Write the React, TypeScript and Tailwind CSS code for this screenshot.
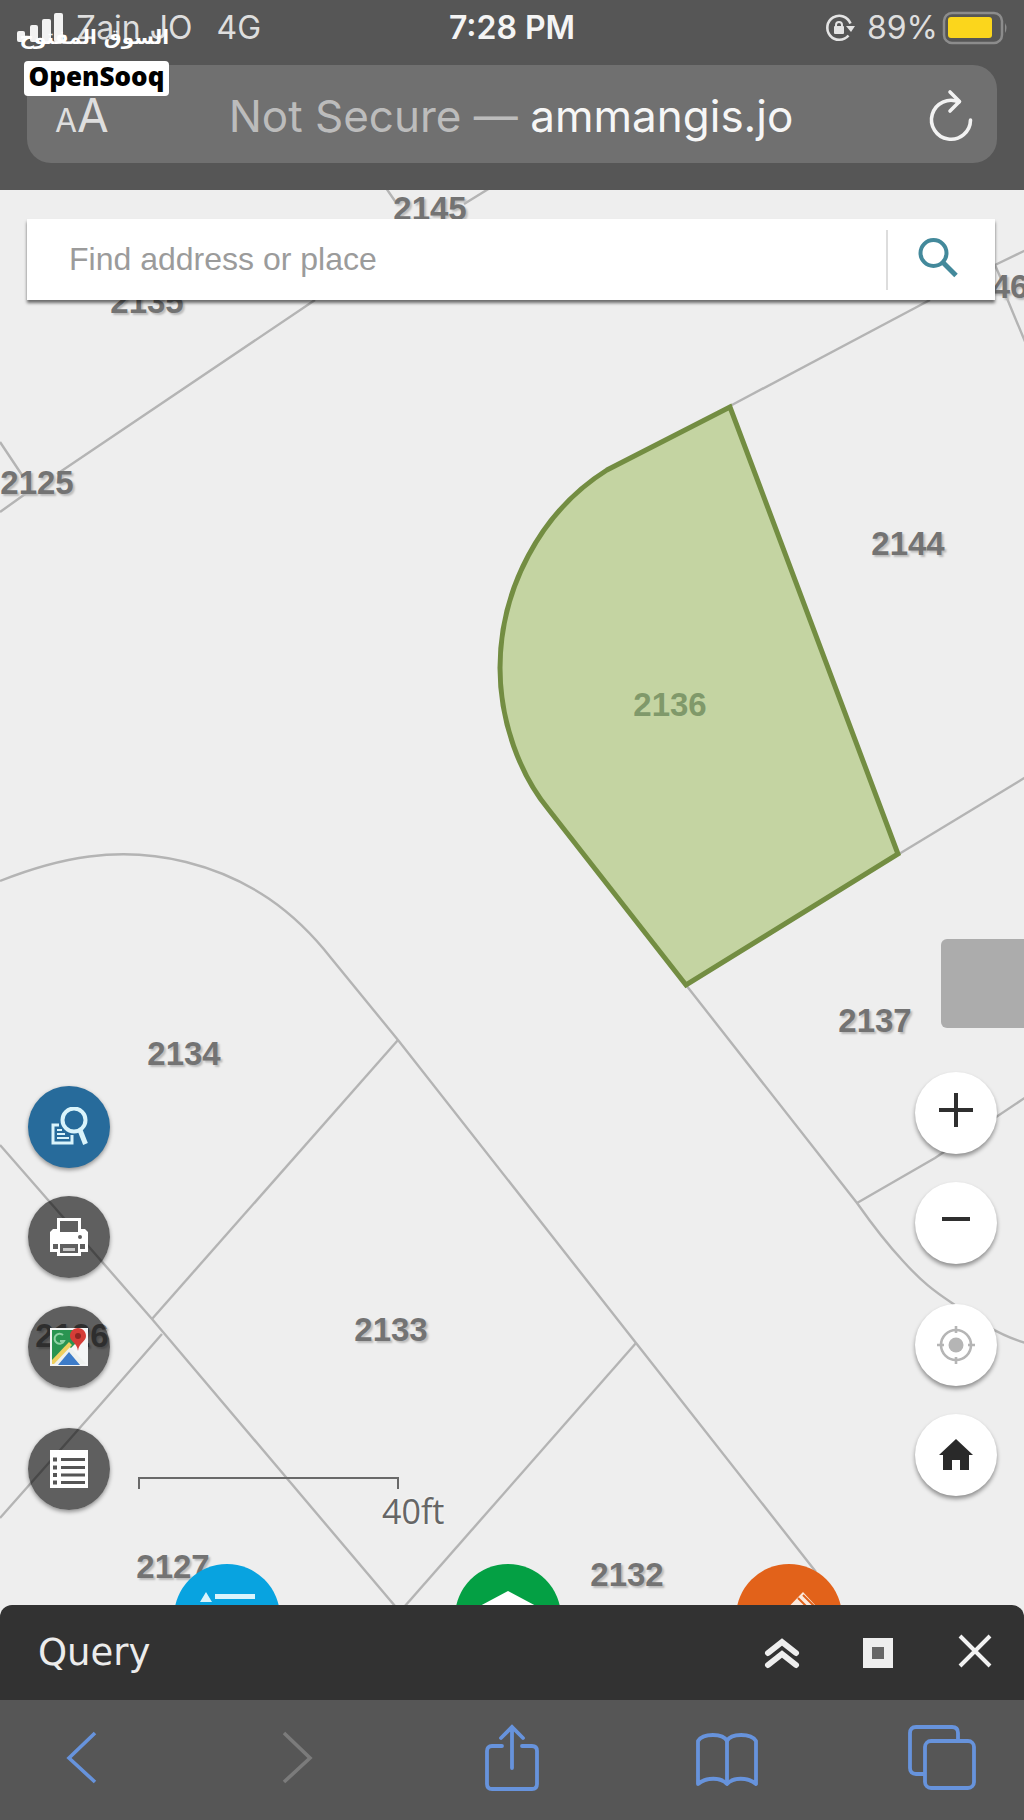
import { useState } from "react";
import type { ReactNode } from "react";

type ParcelLabel = {
  id: string;
  x: number;
  y: number;
  selected?: boolean;
};

const parcelLabels: ParcelLabel[] = [
  { id: "2145", x: 430, y: 220 },
  { id: "2135", x: 147, y: 313 },
  { id: "2125", x: 37, y: 494 },
  { id: "46", x: 1010, y: 298 },
  { id: "2144", x: 908, y: 555 },
  { id: "2136", x: 670, y: 716, selected: true },
  { id: "2137", x: 875, y: 1032 },
  { id: "2134", x: 184, y: 1065 },
  { id: "2126", x: 72, y: 1347 },
  { id: "2133", x: 391, y: 1341 },
  { id: "2132", x: 627, y: 1586 },
  { id: "2127", x: 173, y: 1578 },
];

const parcelLines = [
  "M386 188 397 204M490 188 464 204",
  "M315 300 57 474M0 442 24 478M0 512 28 492",
  "M730 406 930 300",
  "M1026 250 995 265 1002 281M1006 296 1026 344",
  "M899 854 1026 777",
  "M686 985 857 1203C876 1230 890 1247 903 1261C922 1282 934 1291 952 1303C975 1320 1000 1336 1026 1343",
  "M857 1203 935 1158 1026 1097",
  "M0 881C58 858 118 845 186 862C250 878 295 912 331 958L398 1040 636 1343 816 1572",
  "M398 1040 152 1319",
  "M0 1145 152 1319 395 1606",
  "M162 1334 100 1405 0 1518",
  "M636 1343 405 1606",
];

function ParcelMap() {
  return (
    <svg className="absolute inset-0 h-full w-full" viewBox="0 190 1024 1415" preserveAspectRatio="xMidYMid slice" aria-label="Parcel map">
      <g fill="none" stroke="#b4b4b4" strokeWidth="2.4">
        {parcelLines.map((line) => (
          <path key={line} d={line} />
        ))}
      </g>
      <path d="M730 407 607 470C540 512 500 590 500 668C500 722 520 775 549 810L686 985 898 854Z" fill="#c4d4a2" stroke="#738d42" strokeWidth="5" />
      <g className="font-['Liberation_Sans',sans-serif] text-[33px] font-bold [text-shadow:2px_2px_2px_#bbbbbb]" textAnchor="middle">
        {parcelLabels.map((label) => (
          <text key={label.id} x={label.x} y={label.y} className={label.selected ? "fill-[#80996a] [text-shadow:none]" : "fill-[#737373]"}>
            {label.id}
          </text>
        ))}
      </g>
    </svg>
  );
}

function StatusBar() {
  return (
    <div className="grid h-14 grid-cols-3 items-center px-4 text-[32px] text-[#dedede]">
      <div className="flex items-center gap-3">
        <svg width="48" height="30" viewBox="0 0 48 30" fill="#f2f2f2">
          <rect x="1" y="18" width="8" height="11" rx="2" />
          <rect x="14" y="12" width="8" height="17" rx="2" />
          <rect x="26" y="6" width="9" height="23" rx="2" />
          <rect x="38" y="0" width="9" height="29" rx="2" />
        </svg>
        <span className="whitespace-nowrap">Zain JO</span>
        <span className="ml-3">4G</span>
      </div>
      <div className="text-center font-semibold text-[#f4f4f4]">7:28 PM</div>
      <div className="flex items-center justify-end">
        <svg className="mr-3" width="30" height="30" viewBox="0 0 30 30" fill="none" stroke="#e4e4e4" strokeWidth="2.6">
          <path d="M25.5 10.5A12 12 0 1 0 23.5 22.5" />
          <path d="M21 13h9l-4 6z" fill="#e4e4e4" stroke="none" />
          <rect x="9" y="13" width="10" height="8" rx="1" fill="#e4e4e4" stroke="none" />
          <path d="M11 14v-2a3 3 0 0 1 6 0v2" strokeWidth="2" />
        </svg>
        <span>89%</span>
        <svg className="ml-1" width="66" height="34" viewBox="0 0 66 34">
          <rect x="2" y="2" width="58" height="30" rx="8" fill="none" stroke="#8c8c8c" strokeWidth="2.5" />
          <rect x="6" y="6" width="44" height="21" rx="3" fill="#fbd61c" />
          <path d="M63 12q3 5 0 10z" fill="#8c8c8c" />
        </svg>
      </div>
    </div>
  );
}

function Watermark() {
  return (
    <div className="absolute top-4 left-6 w-[145px] text-center">
      <div dir="rtl" lang="ar" className="h-[45px] font-['DejaVu_Sans',sans-serif] text-[20px] leading-[42px] font-bold whitespace-nowrap text-white">
        السوق المفتوح
      </div>
      <div className="h-[35px] rounded-sm bg-white font-['Open_Sans',sans-serif] text-[26px] leading-[31px] font-extrabold text-black">OpenSooq</div>
    </div>
  );
}

function AddressBar() {
  return (
    <div className="mx-[27px] mt-[9px] flex h-[98px] items-center justify-between rounded-3xl bg-[#707070] pt-1 pr-[22px] pl-7">
      <button type="button" aria-label="Text size" className="flex w-10 items-baseline pt-1 text-[#dedede]">
        <span className="text-[32px]">A</span>
        <span className="text-[46px] leading-none">A</span>
      </button>
      <div className="text-[44px] leading-none whitespace-nowrap text-[#bcbcbc]">
        Not Secure — <span className="text-[#f6f6f6]">ammangis.jo</span>
      </div>
      <button type="button" aria-label="Reload">
        <svg width="48" height="54" viewBox="0 0 48 54" fill="none" stroke="#f2f2f2" strokeWidth="3.6" strokeLinecap="round" strokeLinejoin="round">
          <path d="M32 13A19.5 19.5 0 1 0 43.5 31" />
          <path d="M23 3 32.5 12.5 23 22" />
        </svg>
      </button>
    </div>
  );
}

function SearchForm() {
  const [query, setQuery] = useState("");

  return (
    <form className="mt-[29px] mr-[29px] ml-[27px] flex h-[81px] items-center bg-white shadow-[0_3px_3px_rgba(0,0,0,0.55)]" onSubmit={(event) => event.preventDefault()}>
      <input
        type="text"
        aria-label="Find address or place"
        placeholder="Find address or place"
        className="h-full min-w-0 flex-1 pl-[42px] font-['Liberation_Sans',sans-serif] text-[32px] text-[#555555] outline-none placeholder:text-[#9b9b9b]"
        value={query}
        onChange={(event) => setQuery(event.target.value)}
      />
      <button type="submit" aria-label="Search" className="flex h-[60px] w-[109px] items-center justify-center border-l-2 border-[#dddddd] pr-2 pb-1">
        <svg width="42" height="42" viewBox="0 0 42 42" fill="none" stroke="#43899b" strokeWidth="4">
          <circle cx="16.5" cy="16" r="13" />
          <path d="M25.5 25 39 38.5" strokeWidth="5" />
        </svg>
      </button>
    </form>
  );
}

function ToolButton({ label, active, children }: { label: string; active?: boolean; children: ReactNode }) {
  return (
    <button
      type="button"
      aria-label={label}
      className={`flex size-[82px] items-center justify-center rounded-full shadow-[0_2px_4px_rgba(0,0,0,0.4)] ${active ? "bg-[#276b9b]" : "bg-black/60"}`}
    >
      {children}
    </button>
  );
}

function NavButton({ label, children }: { label: string; children: ReactNode }) {
  return (
    <button type="button" aria-label={label} className="flex size-[82px] items-center justify-center rounded-full bg-white shadow-[0_3px_4px_rgba(0,0,0,0.4)]">
      {children}
    </button>
  );
}

function MapTools() {
  return (
    <div className="flex flex-col gap-7">
      <ToolButton label="Query" active>
        <svg width="40" height="40" viewBox="0 0 40 40" fill="none" stroke="#daf4fb" strokeWidth="3">
          <path d="M10 18H4v18h19V28" />
          <path d="M8 23h5M8 27h8M8 31h12" strokeWidth="2" />
          <circle cx="25" cy="13" r="11.5" strokeWidth="4" />
          <path d="M31 23 36.500 37" strokeWidth="5" />
        </svg>
      </ToolButton>
      <ToolButton label="Print">
        <svg width="40" height="40" viewBox="0 0 40 40">
          <path d="M8 1h24v11h4l3 3v20h-7v4H8v-4H1V15l3-3h4z" fill="#ffffff" />
          <path d="M11 4h18v11H11z" fill="#5f5f5f" />
          <circle cx="31" cy="20" r="2" fill="#5f5f5f" />
          <path d="M4 27h5v5H4zM31 27h5v5h-5zM11 27h18v9H11z" fill="#5f5f5f" />
          <path d="M14 31h12v3H14z" fill="#c8c8c8" />
        </svg>
      </ToolButton>
      <ToolButton label="Google Maps">
        <svg width="40" height="40" viewBox="0 0 40 40">
          <path d="M1 1h38v38H1z" fill="#f5f6f6" />
          <path d="M3 3h24v13L6 37l-3-3z" fill="#299451" />
          <path d="m3 37 17-18 17 18z" fill="#eef1ee" />
          <path d="m3 33 17-18 3 3L5 37H3z" fill="#f0d060" />
          <path d="m9 38 11-13 11 13z" fill="#3d7cc9" />
          <path d="M14 8a5 5 0 1 0 1 6h-4" fill="none" stroke="#8fd2a4" strokeWidth="2" />
          <path d="M29 1c-5 0-8 4-8 8 0 6 7 6 8 15 1-9 8-9 8-15 0-4-3-8-8-8z" fill="#d63d37" />
          <circle cx="29" cy="9" r="3" fill="#8e2522" />
        </svg>
      </ToolButton>
      <div className="mt-3 flex gap-7">
        <ToolButton label="Legend">
          <svg width="40" height="40" viewBox="0 0 40 40">
            <path d="M1 1h38v38H1z" fill="#ffffff" />
            <path d="M12 10.500h24M12 18.500h24M12 26h24M12 33.500h24" stroke="#555555" strokeWidth="3" />
            <path d="M4 10.500h4M4 18.500h4M4 26h4M4 33.500h4" stroke="#555555" strokeWidth="4" />
          </svg>
        </ToolButton>
        <div className="mt-[49px] flex h-[33px]">
          <div className="h-3 w-[261px] border-x-2 border-t-2 border-[#696969]" />
          <span className="-ml-[17px] pt-4 font-['Open_Sans',sans-serif] text-[34px] leading-9 text-[#666666] [text-shadow:0_0_3px_white]">40ft</span>
        </div>
      </div>
    </div>
  );
}

function MapNavigation() {
  return (
    <div className="flex flex-col items-end">
      <button type="button" aria-label="Open side panel" className="h-[89px] w-[83px] rounded-l-md bg-[#acacac]" />
      <div className="mt-11 mr-[27px] flex flex-col gap-10">
        <div className="flex flex-col gap-7">
          <NavButton label="Zoom in">
            <svg width="40" height="40" viewBox="0 0 40 40" stroke="#2f2f2f" strokeWidth="4">
              <path d="M3 17h34M20 0v34" />
            </svg>
          </NavButton>
          <NavButton label="Zoom out">
            <svg width="40" height="40" viewBox="0 0 40 40" stroke="#2f2f2f" strokeWidth="4">
              <path d="M6 16h28" />
            </svg>
          </NavButton>
        </div>
        <div className="flex flex-col gap-7">
          <NavButton label="My location">
            <svg width="40" height="40" viewBox="0 0 40 40" fill="none" stroke="#b5b5b5" strokeWidth="2.6">
              <circle cx="20" cy="20" r="15" />
              <circle cx="20" cy="20" r="7.5" fill="#b5b5b5" stroke="none" />
              <path d="M20 1v7M20 32v7M1 20h7M32 20h7" />
            </svg>
          </NavButton>
          <NavButton label="Default extent">
            <svg width="40" height="40" viewBox="0 0 40 40" fill="#292929">
              <path d="M20 4 37 20H33V35H24V25H16V35H7V20H3z" />
            </svg>
          </NavButton>
        </div>
      </div>
    </div>
  );
}

function WidgetDock() {
  return (
    <div className="flex h-[41px] justify-center gap-[175px] overflow-hidden pr-[8px]">
      <button type="button" aria-label="Legend list" className="size-[106px] shrink-0 rounded-full bg-[#08a3e0]">
        <svg className="h-full w-full" viewBox="0 0 106 106" fill="#d9f4fc">
          <path d="m32 28 6 10H26zM41 30h40v5H41z" />
          <path d="M26 48h10v10H26zM41 50h40v5H41z" />
        </svg>
      </button>
      <button type="button" aria-label="Layers" className="size-[106px] shrink-0 rounded-full bg-[#04a044]">
        <svg className="h-full w-full" viewBox="0 0 106 106" fill="#ffffff">
          <path d="m53 27 30 16-30 16-30-16z" />
        </svg>
      </button>
      <button type="button" aria-label="Draw" className="size-[106px] shrink-0 rounded-full bg-[#e2621a]">
        <svg className="h-full w-full" viewBox="0 0 106 106">
          <path d="M67 28 80 42 54 68 42 54z" fill="#fbe9dd" />
          <path d="M62 34 74 46M67 31 78 42" stroke="#e2621a" strokeWidth="2" />
        </svg>
      </button>
    </div>
  );
}

function QueryPanelHeader() {
  return (
    <div className="bg-[#eeeeee]">
      <div className="flex h-[95px] items-center justify-between rounded-t-xl bg-[#323232] pr-[32px] pl-[38px]">
        <h2 className="font-['DejaVu_Sans',sans-serif] text-[37px] text-[#ececec]">Query</h2>
        <div className="flex items-center">
          <button type="button" aria-label="Expand" className="mr-[62px]">
            <svg width="36" height="32" viewBox="0 0 36 32" fill="none" stroke="#eeeeee" strokeWidth="6" strokeLinecap="round">
              <path d="M4 16 18 5 32 16M4 28 18 17 32 28" />
            </svg>
          </button>
          <button type="button" aria-label="Maximize" className="mr-[64px]">
            <svg width="32" height="32" viewBox="0 0 32 32">
              <path d="M1 1h30v30H1z" fill="#eeeeee" />
              <path d="M10 10h12v12H10z" fill="#666666" />
            </svg>
          </button>
          <button type="button" aria-label="Close" className="pb-1">
            <svg width="34" height="34" viewBox="0 0 34 34" fill="none" stroke="#f2f2f2" strokeWidth="4">
              <path d="M2 2 32 32M32 2 2 32" />
            </svg>
          </button>
        </div>
      </div>
    </div>
  );
}

function BrowserToolbar() {
  return (
    <nav className="flex h-[120px] items-center justify-between bg-[#565656] px-12 pb-1 text-[#6793dc]">
      <button type="button" aria-label="Back" className="flex w-[68px] justify-center">
        <svg width="34" height="54" viewBox="0 0 34 54" fill="none" stroke="currentColor" strokeWidth="3.6">
          <path d="M30 2 4 27 30 51" />
        </svg>
      </button>
      <button type="button" aria-label="Forward" className="flex w-[68px] justify-center text-[#7b7b7b]">
        <svg width="34" height="54" viewBox="0 0 34 54" fill="none" stroke="currentColor" strokeWidth="3.6">
          <path d="M4 2 30 27 4 51" />
        </svg>
      </button>
      <button type="button" aria-label="Share" className="flex w-[68px] justify-center">
        <svg width="54" height="68" viewBox="0 0 54 68" fill="none" stroke="currentColor" strokeWidth="3.8" strokeLinecap="round">
          <path d="M17 22H7q-5 0-5 5v33q0 5 5 5h40q5 0 5-5V27q0-5-5-5H37" />
          <path d="M27 44V3M16 14 27 3 38 14" />
        </svg>
      </button>
      <button type="button" aria-label="Bookmarks" className="flex w-[68px] justify-center pt-1">
        <svg width="62" height="54" viewBox="0 0 62 54" fill="none" stroke="currentColor" strokeWidth="3.8" strokeLinejoin="round">
          <path d="M31 8C27 0 7 0 2 8V51C10 44 25 44 31 51C37 44 52 44 60 51V8C55 0 35 0 31 8z" />
          <path d="M31 8V51" />
        </svg>
      </button>
      <button type="button" aria-label="Tabs" className="flex w-[68px] justify-center">
        <svg width="68" height="66" viewBox="0 0 68 66" fill="none" stroke="currentColor" strokeWidth="3.8">
          <path d="M16 49H8q-6 0-6-6V8q0-6 6-6h36q6 0 6 6v7" />
          <rect x="17" y="16" width="49" height="47" rx="6" />
        </svg>
      </button>
    </nav>
  );
}

export default function App() {
  return (
    <div className="flex min-h-screen flex-col bg-[#565656] font-['Inter',sans-serif]">
      <header className="relative h-[190px] bg-[#565656]">
        <StatusBar />
        <AddressBar />
        <Watermark />
      </header>
      <main className="relative flex flex-1 flex-col bg-[#eeeeee]">
        <ParcelMap />
        <div className="relative flex flex-1 flex-col">
          <SearchForm />
          <div className="flex flex-1 items-end justify-between">
            <div className="pb-[54px] pl-7">
              <MapTools />
            </div>
            <div className="pb-[68px]">
              <MapNavigation />
            </div>
          </div>
          <WidgetDock />
        </div>
      </main>
      <QueryPanelHeader />
      <BrowserToolbar />
    </div>
  );
}
